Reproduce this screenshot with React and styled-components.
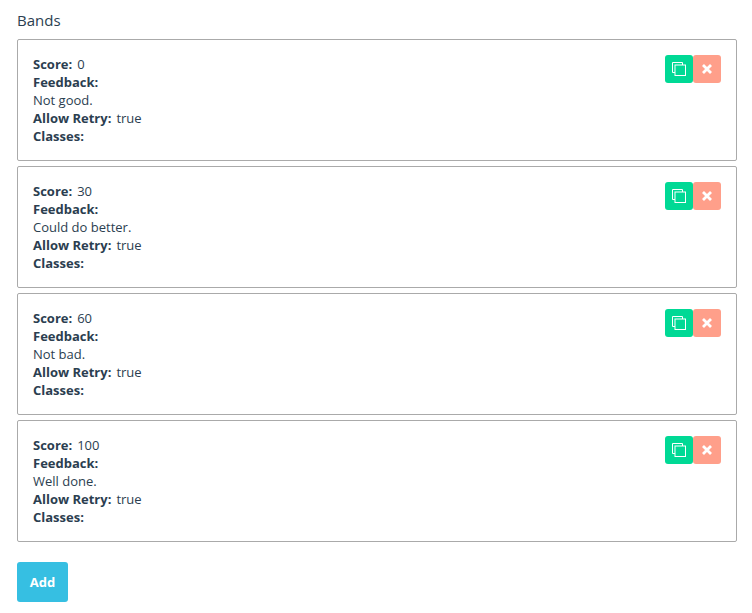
import React from "react";
import styled, { createGlobalStyle } from "styled-components";

const Global = createGlobalStyle`
  html, body { margin: 0; padding: 0; background: #fff; }
  body { font-family: "Open Sans", "Liberation Sans", sans-serif; color: #2b3e50; }
`;

const Page = styled.div`
  width: 720px;
  padding: 11px 15px 11px 17px;
`;

const Title = styled.div`
  font-size: 15px;
  line-height: 18px;
  height: 18px;
  margin-bottom: 10px;
  color: #2b3e50;
`;

const List = styled.div`
  display: flex;
  flex-direction: column;
  gap: 5px;
`;

const Card = styled.div`
  box-sizing: border-box;
  height: 122px;
  border: 1px solid #aaaaaa;
  border-radius: 2px;
  padding: 15px;
  display: flex;
  justify-content: space-between;
  align-items: flex-start;
`;

const Details = styled.div`
  font-size: 13px;
  line-height: 18px;
`;

const Row = styled.div`
  display: flex;
  gap: 5px;
`;

const Label = styled.span`
  font-weight: 700;
`;

const Actions = styled.div`
  display: flex;
`;

const IconButton = styled.button`
  width: 28px;
  height: 28px;
  border: 0;
  padding: 0;
  border-radius: 3px;
  background: ${(p) => p.$bg};
  display: flex;
  align-items: center;
  justify-content: center;
`;

const AddButton = styled.button`
  display: block;
  margin-top: 20px;
  width: 51px;
  height: 40px;
  border: 0;
  padding: 0;
  border-radius: 3px;
  background: #36bfe2;
  color: #fff;
  font-family: inherit;
  font-size: 13px;
  font-weight: 700;
`;

const CopyIcon = () => (
  <svg width="14" height="14" viewBox="0 0 14 14" fill="none" stroke="#fff" strokeWidth="1">
    <path d="M3 10.5 H0.5 V0.5 H10.5 V3" />
    <rect x="3" y="3" width="10.5" height="10.5" />
  </svg>
);

const CloseIcon = () => (
  <svg width="10" height="10" viewBox="0 0 10 10" stroke="#fff" strokeWidth="2.8" strokeLinecap="butt">
    <path d="M1 1 L9 9 M9 1 L1 9" />
  </svg>
);

const bands = [
  { score: 0, feedback: "Not good." },
  { score: 30, feedback: "Could do better." },
  { score: 60, feedback: "Not bad." },
  { score: 100, feedback: "Well done." },
];

export default function App() {
  return (
    <Page>
      <Global />
      <Title>Bands</Title>
      <List>
        {bands.map((b) => (
          <Card key={b.score}>
            <Details>
              <Row><Label>Score:</Label><span>{b.score}</span></Row>
              <Row><Label>Feedback:</Label></Row>
              <Row>{b.feedback}</Row>
              <Row><Label>Allow Retry:</Label><span>true</span></Row>
              <Row><Label>Classes:</Label></Row>
            </Details>
            <Actions>
              <IconButton $bg="#00d995"><CopyIcon /></IconButton>
              <IconButton $bg="#ff9f8a"><CloseIcon /></IconButton>
            </Actions>
          </Card>
        ))}
      </List>
      <AddButton>Add</AddButton>
    </Page>
  );
}
